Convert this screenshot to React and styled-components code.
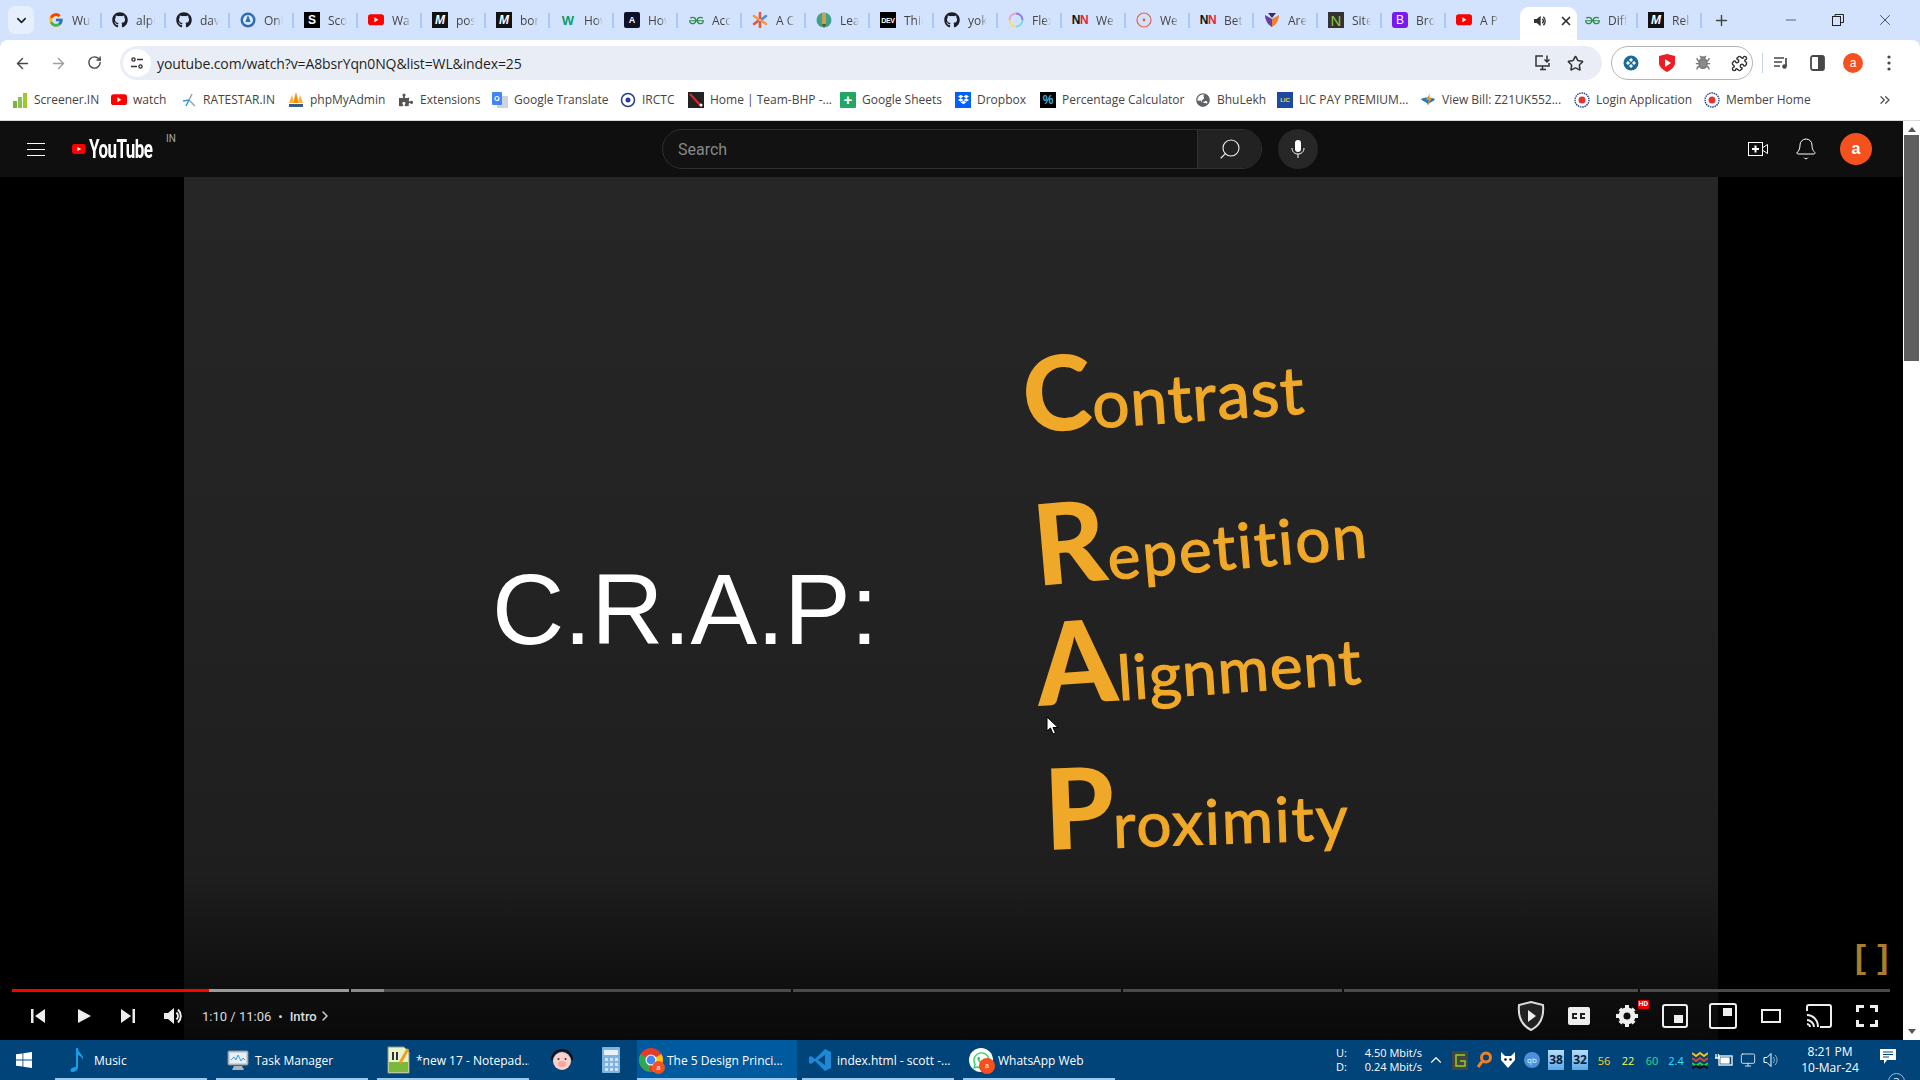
import React from 'react';
import styled, { createGlobalStyle } from 'styled-components';
import { ArrowLeft, ArrowRight, RotateCw, Star, Search, Bell, ChevronDown, Minus, Plus, X, ChevronRight, ChevronsRight, ChevronUp, Bug, Puzzle, Monitor } from 'lucide-react';
import { FaGithub, FaYoutube, FaGlobeAsia, FaPuzzlePiece, FaWhatsapp } from 'react-icons/fa';
import { FcGoogle } from 'react-icons/fc';
import { SiGeeksforgeeks, SiDropbox } from 'react-icons/si';

const Global = createGlobalStyle`
  html, body { margin: 0; padding: 0; background: #000; overflow: hidden; }
  * { box-sizing: border-box; }
  #root { width: 1920px; height: 1080px; }
`;
const UI = `"Open Sans", "Noto Sans", "Liberation Sans", sans-serif`;

const Screen = styled.div`
  width: 1920px; height: 1080px; display: flex; flex-direction: column; overflow: hidden;
  background: #d3e3fd; font-family: ${UI};
`;
/* ---------- tab strip ---------- */
const TabStrip = styled.div`
  height: 40px; flex: none; display: flex; align-items: stretch; background: #d3e3fd; position: relative;
`;
const TabSearch = styled.div`
  width: 26px; height: 28px; margin: 6px 4px 6px 8px; border-radius: 7px; background: #e6effd;
  display: flex; align-items: center; justify-content: center; color: #1f1f1f; flex: none;
`;
const Tab = styled.div`
  width: 64px; flex: none; display: flex; align-items: center; gap: 8px; padding-left: 10px; position: relative;
  &::after { content: ""; position: absolute; right: 0; top: 13px; height: 15px; width: 2px; background: #a8c7fa; display: ${p => p.$plain ? 'none' : 'block'}; }
`;
const TabTitle = styled.span`
  font-size: 12px; color: #444; width: 19px; overflow: hidden; white-space: nowrap;
  -webkit-mask-image: linear-gradient(90deg, #000 60%, transparent);
  mask-image: linear-gradient(90deg, #000 60%, transparent);
`;
const ActiveTab = styled.div`
  width: 57px; margin-top: 7px; margin-left: 10px; margin-right: -3px; flex: none; background: #fff; border-radius: 9px 9px 0 0;
  display: flex; align-items: center; justify-content: center; gap: 11px; color: #333; padding-left: 8px; height: 33px; padding-bottom: 5px;
`;
const NewTab = styled.div`
  width: 32px; flex: none; display: flex; align-items: center; justify-content: center; color: #444; margin-left: 3px;
`;
const WinButtons = styled.div`
  margin-left: auto; display: flex; align-items: center; color: #222; padding-right: 12px;
`;
const WinButton = styled.span`
  width: 47px; display: flex; justify-content: center;
`;
/* ---------- toolbar ---------- */
const Toolbar = styled.div`
  height: 40px; flex: none; background: #fff; border-radius: 8px 8px 0 0; display: flex; align-items: center; position: relative; padding-top: 6px;
`;
const NavButton = styled.span`
  width: 36px; display: flex; justify-content: center; color: ${p => p.$off ? '#9aa0a6' : '#474747'}; flex: none;
`;
const NavGroup = styled.div`
  display: flex; margin-left: 4px; width: 116px; flex: none;
`;
const Omnibox = styled.div`
  width: 1482px; height: 34px; background: #e9eef6; border-radius: 17px; display: flex; align-items: center; flex: none; padding: 0 10px 0 3px;
`;
const TuneCircle = styled.span`
  width: 28px; height: 28px; border-radius: 50%; background: #fff; display: flex; align-items: center; justify-content: center; flex: none;
`;
const Url = styled.span`
  font-size: 14px; margin-left: 6px; color: #1f1f1f; font-family: "Open Sans", sans-serif; flex: 1; white-space: nowrap; letter-spacing: -.12px;
`;
const OmniIcon = styled.span`
  width: 33px; display: flex; justify-content: center; color: #333; flex: none;
`;
const ExtPill = styled.div`
  margin-left: 9px; width: 142px; height: 34px; border: 1px solid #b5b5b5; border-radius: 17px; display: flex; align-items: center; padding-left: 1px; flex: none; background: #fff;
`;
const ExtIcon = styled.span`
  width: 36px; display: flex; justify-content: center; flex: none;
`;
const VLine = styled.span`
  width: 1px; height: 20px; background: #c4d3ea; margin: 0 9px; flex: none;
`;
const ToolIcon = styled.span`
  width: 36px; display: flex; justify-content: center; flex: none; color: #474747;
`;
const Avatar = styled.span`
  width: ${p => p.$d}px; height: ${p => p.$d}px; border-radius: 50%; background: #f4511e; color: #fff; display: flex; align-items: center; justify-content: center;
  font-family: "Liberation Sans", sans-serif; font-size: ${p => p.$fs}px; font-weight: ${p => p.$bold ? 700 : 400}; flex: none;
`;
/* ---------- bookmarks ---------- */
const BookmarkBar = styled.div`
  height: 41px; flex: none; background: #fff; display: flex; align-items: center; padding: 0 0 1px 12px; border-bottom: 1px solid #d8d8d8; position: relative;
`;
const Bookmark = styled.div`
  display: flex; align-items: center; gap: 6px; flex: none; width: ${p => p.$w}px; font-size: 12px; color: #444; white-space: nowrap;
`;
const BookmarkMore = styled.span`
  margin-left: auto; margin-right: 27px; color: #555; display: flex;
`;
const IconSlot = styled.span`
  width: 16px; height: 16px; display: flex; align-items: center; justify-content: center; flex: none;
`;
const Tile = styled.span`
  width: 16px; height: 16px; flex: none; display: flex; align-items: center; justify-content: center; background: ${p => p.$bg};
  color: ${p => p.$fg}; font: ${p => p.$weight || 700} ${p => p.$fs || 11}px/1 "Liberation Sans", sans-serif; border-radius: ${p => p.$r || 0}px; letter-spacing: ${p => p.$ls || 0}px; font-style: ${p => p.$it ? 'italic' : 'normal'};
`;
/* ---------- youtube ---------- */
const YouTubeArea = styled.div`
  flex: 1; min-height: 0; display: flex; background: #0f0f0f;
`;
const Page = styled.div`
  width: 1903px; flex: none; display: flex; flex-direction: column;
`;
const Masthead = styled.div`
  height: 56px; flex: none; background: #0f0f0f; display: flex; align-items: center; position: relative; padding-left: 27px;
`;
const Logo = styled.div`
  display: flex; align-items: center; margin-left: 27px; position: relative; width: 110px; height: 22px; flex: none;
`;
const LogoWord = styled.span`
  display: inline-block; font: 700 25px/1 Roboto, "Liberation Sans", sans-serif; color: #fff; transform: scaleX(.68); transform-origin: 0 50%; letter-spacing: -.8px; margin-left: 3px;
`;
const LogoCountry = styled.span`
  position: absolute; left: 94px; top: -4px; font: 400 10px/1 Roboto, sans-serif; color: #aaa;
`;
const SearchBox = styled.div`
  margin-left: 480px; width: 600px; height: 40px; flex: none; display: flex; border: 1px solid #303030; border-radius: 20px; overflow: hidden; background: #121212;
`;
const SearchInput = styled.div`
  flex: 1; padding-left: 15px; display: flex; align-items: center; font: 400 16px Roboto, sans-serif; color: #888;
`;
const SearchButton = styled.div`
  width: 64px; flex: none; background: #222; border-left: 1px solid #303030; display: flex; align-items: center; justify-content: center; color: #f1f1f1;
`;
const MicButton = styled.div`
  width: 40px; height: 40px; border-radius: 50%; background: #272727; margin-left: 16px; display: flex; align-items: center; justify-content: center; flex: none;
`;
const MastRight = styled.div`
  margin-left: auto; display: flex; align-items: center; padding-right: 31px; gap: 0; color: #fff;
`;
const MastIcon = styled.span`
  width: 48px; display: flex; justify-content: center; color: #fff;
`;
const Player = styled.div`
  flex: 1; min-height: 0; position: relative; background: #000; padding: 0 185px 0 184px; display: flex; overflow: hidden;
`;
const Frame = styled.div`
  flex: 1; background: linear-gradient(180deg, #262626 0%, #232323 45%, #1f1f1f 75%, #1c1c1c 100%);
`;
const Shade = styled.div`
  position: absolute; left: 0; right: 0; bottom: 0; height: 170px; background: linear-gradient(180deg, rgba(0,0,0,0), rgba(0,0,0,.68));
`;
const Headline = styled.div`
  position: absolute; left: 492px; top: 382px; font: 400 100px/1 "Liberation Sans", Arial, sans-serif; color: #fff; letter-spacing: -.4px;
`;
const Word = styled.div`
  position: absolute; left: ${p => p.$x}px; top: ${p => p.$y}px; transform: rotate(${p => p.$r}deg); transform-origin: 0 100%; white-space: nowrap; color: #f0a829;
  font-family: "Lato", sans-serif; display: flex; align-items: baseline; line-height: 1;
`;
const WordCap = styled.span`
  font-size: ${p => p.$s}px; font-weight: 900; margin-right: ${p => p.$m || 0}px; transform: rotate(${p => p.$cr || 0}deg);
`;
const WordRest = styled.span`
  font-size: ${p => p.$s}px; font-weight: 400; letter-spacing: ${p => p.$ls || 0}px; -webkit-text-stroke: 1.2px #f0a829;
`;
const Bracket = styled.div`
  position: absolute; left: 1855px; top: 763px; font: 700 33px/1 "Liberation Sans", sans-serif; color: #a97e2a; word-spacing: 2px;
`;
const Cursor = styled.svg`
  position: absolute; left: 1046px; top: 539px; width: 13px; height: 19px;
`;
const ProgressRow = styled.div`
  position: absolute; left: 12px; top: 812px; width: 1878px; height: 3px; display: flex; gap: 2px;
`;
const Chapter = styled.div`
  height: 3px; flex: none; width: ${p => p.$w}px; background: ${p => p.$bg || '#4a4a4a'};
`;
const ControlBar = styled.div`
  position: absolute; left: 0; right: 0; top: 815px; height: 48px; display: flex; align-items: center; padding-left: 14px; color: #eee;
`;
const CtrlBtn = styled.span`
  width: ${p => p.$w || 48}px; height: 48px; display: flex; align-items: center; justify-content: center; flex: none; position: relative;
`;
const TimeText = styled.span`
  font: 400 13px Roboto, sans-serif; color: #ddd; margin-left: 6px; white-space: nowrap;
`;
const Dot = styled.span`
  color: #ddd; font: 400 13px Roboto, sans-serif; margin: 0 7px;
`;
const Chap = styled.span`
  font: 500 13px Roboto, sans-serif; color: #ddd;
`;
const CtrlRight = styled.div`
  margin-left: auto; display: flex; margin-right: 12px;
`;
const HdBadge = styled.span`
  position: absolute; top: 8px; right: 2px; background: #e00; color: #fff; font: 700 7px/9px Roboto, sans-serif; padding: 0 1px; border-radius: 1px;
`;
const Scrollbar = styled.div`
  width: 17px; flex: none; background: #fff; display: flex; flex-direction: column; align-items: center; justify-content: space-between; position: relative; padding: 6px 0;
`;
const ScrollThumb = styled.div`
  position: absolute; top: 14px; left: 1px; width: 15px; height: 226px; background: #5f5f5f;
`;
const Arrow = styled.span`
  width: 0; height: 0; border-left: 4px solid transparent; border-right: 4px solid transparent; ${p => p.$up ? 'border-bottom: 5px solid #555;' : 'border-top: 5px solid #555;'}
`;
/* ---------- taskbar ---------- */
const Taskbar = styled.div`
  height: 40px; flex: none; background: #00447a; display: flex; align-items: stretch; color: #fff; font-size: 12px;
`;
const StartBtn = styled.span`
  width: 48px; margin-right: 7px; flex: none; display: flex; align-items: center; justify-content: center;
`;
const TaskItem = styled.div`
  width: ${p => p.$w || 152}px; flex: none; margin-right: ${p => p.$mr ?? 9}px; display: flex; align-items: center; gap: 5px; padding-left: ${p => p.$pl ?? 10}px; white-space: nowrap; position: relative;
  background: ${p => p.$active ? '#005a9e' : 'transparent'}; overflow: hidden;
  &::after { content: ""; position: absolute; left: 0; right: 0; bottom: 0; height: 2px; background: #99cbf2; }
`;
const TaskPlain = styled.span`
  width: ${p => p.$w}px; flex: none; display: flex; align-items: center; justify-content: center;
`;
const AppIcon = styled.span`
  width: 24px; height: 24px; position: relative; display: flex; align-items: center; justify-content: center; flex: none;
`;
const Badge = styled.span`
  position: absolute; right: -2px; bottom: -2px; width: 13px; height: 13px; border-radius: 50%; background: #f4511e; color: #fff; font: 400 7px/13px "Liberation Sans", sans-serif; text-align: center;
`;
const Tray = styled.div`
  margin-left: auto; display: flex; align-items: center; flex: none;
`;
const NetStats = styled.div`
  width: 86px; flex: none; display: grid; grid-template-columns: 24px 1fr; font-size: 11px; line-height: 14px; margin-right: 2px;
`;
const NetValue = styled.span`
  text-align: right; white-space: nowrap;
`;
const TrayCell = styled.span`
  width: 24px; flex: none; display: flex; justify-content: center; align-items: center; color: ${p => p.$c || '#fff'}; font-size: 11px;
`;
const NumTile = styled.span`
  width: 16px; height: 20px; background: linear-gradient(#b9dcf9, #5aa9ea); color: #0a2342; font: 700 12px/20px "Noto Sans", sans-serif; text-align: center;
`;
const Clock = styled.div`
  width: 84px; margin-left: 4px; flex: none; text-align: center; line-height: 16px; font-size: 12px; white-space: nowrap;
`;
const Notify = styled.div`
  width: 36px; flex: none; position: relative; display: flex; align-items: center; justify-content: center; margin-right: 12px;
`;
const NotifyCount = styled.span`
  position: absolute; left: 16px; top: 18px; width: 17px; height: 17px; border-radius: 50%; background: #00447a; border: 1px solid #8fc1ea; font-size: 11px; line-height: 15px; text-align: center;
`;

const Yt = ({ s = 16 }) => (
  <svg width={s} height={s * .72} viewBox="0 0 20 14"><rect width="20" height="14" rx="3.5" fill="#f00" /><path d="M8 4l5 3-5 3z" fill="#fff" /></svg>
);
const NN = () => <Tile $bg="transparent" $fg="#111" $fs={12} $ls={-0.5}>N<span style={{ color: '#e23' }}>N</span></Tile>;
const Fav = ({ k }) => {
  switch (k) {
    case 'g': return <IconSlot><FcGoogle size={16} /></IconSlot>;
    case 'gh': return <IconSlot><FaGithub size={16} color="#1b1f23" /></IconSlot>;
    case 'on': return <IconSlot><svg width="16" height="16" viewBox="0 0 16 16"><circle cx="8" cy="8" r="7.5" fill="#2d6fb0" /><circle cx="8" cy="8" r="5" fill="#d9e9f7" /><path d="M8 3l2.6 7H5.4z" fill="#2d6fb0" /></svg></IconSlot>;
    case 's': return <Tile $bg="#000" $fg="#fff" $fs={12}>S</Tile>;
    case 'yt': return <IconSlot><Yt /></IconSlot>;
    case 'm': return <Tile $bg="#121212" $fg="#fff" $fs={12} $it>M</Tile>;
    case 'w': return <Tile $bg="transparent" $fg="#0a9d6e" $fs={13}>W</Tile>;
    case 'a': return <Tile $bg="#0e1228" $fg="#fff" $fs={9} $r={2}>A</Tile>;
    case 'gfg': return <IconSlot><SiGeeksforgeeks size={15} color="#2f8d46" /></IconSlot>;
    case 'ast': return <IconSlot><svg width="16" height="16" viewBox="0 0 16 16" strokeWidth="2.6" strokeLinecap="round"><path d="M8 1v5" stroke="#e8553f" /><path d="M8 10v5" stroke="#e8553f" /><path d="M2 4l4 3" stroke="#f09a3e" /><path d="M14 4l-4 3" stroke="#4a8bd6" /><path d="M2 12l4-3" stroke="#e8553f" /><path d="M14 12l-4-3" stroke="#f09a3e" /></svg></IconSlot>;
    case 'pen': return <IconSlot><svg width="16" height="16" viewBox="0 0 16 16"><circle cx="8" cy="8" r="7.5" fill="#3fa08e" /><rect x="6" y="1" width="4" height="11" fill="#c9a24a" /><path d="M6 12h4l-2 3.5z" fill="#6b4a2a" /></svg></IconSlot>;
    case 'dev': return <Tile $bg="#000" $fg="#fff" $fs={7} $ls={-.3}>DEV</Tile>;
    case 'ring': return <IconSlot><svg width="16" height="16" viewBox="0 0 16 16" fill="none" strokeWidth="2"><path d="M8 1.5a6.5 6.5 0 0 1 6.5 6.5" stroke="#8a7be8" /><path d="M14.5 8A6.5 6.5 0 0 1 8 14.5" stroke="#7fd6e8" /><path d="M8 14.5A6.5 6.5 0 0 1 1.5 8" stroke="#f4dc7a" /><path d="M1.5 8A6.5 6.5 0 0 1 8 1.5" stroke="#f0a0c8" /></svg></IconSlot>;
    case 'nn': return <NN />;
    case 'dot': return <IconSlot><svg width="16" height="16" viewBox="0 0 16 16"><circle cx="8" cy="8" r="7" fill="none" stroke="#e5604c" strokeWidth="1.2" /><circle cx="8" cy="8" r="1.4" fill="#e5604c" /></svg></IconSlot>;
    case 'shield': return <IconSlot><svg width="16" height="16" viewBox="0 0 16 16"><path d="M1 3l7 4v8C4 13 1 8 1 3z" fill="#6a3fa0" /><path d="M15 3L8 7v8c4-2 7-7 7-12z" fill="#f08030" /><path d="M4 1l4 5 4-5z" fill="#3a2a6a" /></svg></IconSlot>;
    case 'n': return <Tile $bg="#333" $fg="#8cc63f" $fs={15} $weight={400}>N</Tile>;
    case 'b': return <Tile $bg="#7a18f0" $fg="#fff" $fs={12} $r={3} $weight={400}>B</Tile>;
    case 'bars': return <IconSlot><svg width="16" height="16" viewBox="0 0 16 16"><rect x="1" y="9" width="4" height="7" fill="#7cb342" /><rect x="6" y="5" width="4" height="11" fill="#8bc34a" /><rect x="11" y="1" width="4" height="15" fill="#9ccc2a" /></svg></IconSlot>;
    case 'rs': return <IconSlot><svg width="16" height="16" viewBox="0 0 16 16" fill="none" strokeWidth="1.5"><path d="M2 9l6-1" stroke="#2f9fd8" /><path d="M8 8l3-6" stroke="#9aa5ad" /><path d="M8 8l6 6" stroke="#9aa5ad" /><path d="M8 8l-3 6" stroke="#2f9fd8" /></svg></IconSlot>;
    case 'pma': return <IconSlot><svg width="16" height="16" viewBox="0 0 16 16"><path d="M8 0l3 11H5z" fill="#f29111" /><path d="M4 3l2 8H1z" fill="#f7b23b" /><path d="M12 3l3 8h-5z" fill="#f7b23b" /><rect x="1" y="12" width="14" height="3" fill="#3b5a8a" /></svg></IconSlot>;
    case 'ext': return <IconSlot><FaPuzzlePiece size={14} color="#555" /></IconSlot>;
    case 'tr': return <IconSlot><svg width="16" height="16" viewBox="0 0 16 16"><rect x="5" y="4" width="11" height="12" fill="#cfd4da" /><rect width="10" height="13" rx="1" fill="#4285f4" /><circle cx="5" cy="6.5" r="2" fill="none" stroke="#fff" strokeWidth="1.2" /></svg></IconSlot>;
    case 'ir': return <IconSlot><svg width="16" height="16" viewBox="0 0 16 16"><circle cx="8" cy="8" r="6.5" fill="none" stroke="#27408b" strokeWidth="1.5" /><circle cx="8" cy="8" r="2.5" fill="#27408b" /></svg></IconSlot>;
    case 'bhp': return <IconSlot><svg width="16" height="16" viewBox="0 0 16 16"><rect width="16" height="16" fill="#222" /><path d="M2 2l11 12" stroke="#e8252a" strokeWidth="2" /><circle cx="13" cy="13" r="1.5" fill="#fff" /></svg></IconSlot>;
    case 'sheets': return <Tile $bg="#23a566" $fg="#fff" $fs={15} $r={1} $weight={700}>+</Tile>;
    case 'db': return <IconSlot style={{ background: '#0061fe' }}><SiDropbox size={11} color="#fff" /></IconSlot>;
    case 'pct': return <Tile $bg="#000" $fg="#3fb4ef" $fs={12}>%</Tile>;
    case 'globe': return <IconSlot><FaGlobeAsia size={14} color="#5f6368" /></IconSlot>;
    case 'lic': return <Tile $bg="#1b4aa0" $fg="#ffd84a" $fs={6}>LIC</Tile>;
    case 'bolt': return <IconSlot><svg width="16" height="16" viewBox="0 0 16 16"><path d="M1 7c3-2 10-2 14 0-2 4-5 2-7 6-1-4-4-2-7-6z" fill="#2a78b8" /><path d="M10 1L6 8h3l-2 6 5-8H9z" fill="#f29111" /></svg></IconSlot>;
    case 'epf': return <IconSlot><svg width="16" height="16" viewBox="0 0 16 16"><circle cx="8" cy="8" r="7" fill="#fff" stroke="#27408b" strokeWidth="1.4" strokeDasharray="1.5 .8" /><circle cx="8" cy="8" r="3.5" fill="#e3342f" /></svg></IconSlot>;
    default: return <IconSlot />;
  }
};

const tabs = [['g','Wu'],['gh','alpi'],['gh','dav'],['on','Onl'],['s','Sco'],['yt','Wa'],['m','pos'],['m','bor'],['w','How'],['a','How'],['gfg','Acc'],['ast','A C'],['pen','Lea'],['dev','Thir'],['gh','yok'],['ring','Flex'],['nn','We'],['dot','We'],['nn','Bet'],['shield','Are'],['n','Site'],['b','Bro'],['yt','A P']];
const marks = [['bars','Screener.IN',99],['yt','watch',70],['rs','RATESTAR.IN',107],['pma','phpMyAdmin',110],['ext','Extensions',94],['tr','Google Translate',128],['ir','IRCTC',68],['bhp','Home | Team-BHP -...',152],['sheets','Google Sheets',115],['db','Dropbox',85],['pct','Percentage Calculator',155],['globe','BhuLekh',82],['lic','LIC PAY PREMIUM...',143],['bolt','View Bill: Z21UK552...',154],['epf','Login Application',130],['epf','Member Home',110]];
const chapters = [[337],[1],[440],[328],[219],[294],[250]];

const I = ({ children, w = 24, h = 24, vb = '0 0 24 24', ...r }) => <svg width={w} height={h} viewBox={vb} {...r}>{children}</svg>;
const Vol = ({ s = 24, c = '#eee' }) => (
  <I w={s} h={s}><path d="M3 9v6h4l6 5V4L7 9z" fill={c} /><path d="M15.5 8.5a5 5 0 0 1 0 7M17 5.5a9 9 0 0 1 0 13" stroke={c} strokeWidth="2" fill="none" /></I>
);

export default function App() {
  return (
    <Screen>
      <Global />
      <TabStrip>
        <TabSearch><ChevronDown size={15} strokeWidth={2.5} /></TabSearch>
        {tabs.map(([k, t], i) => <Tab key={i} $plain={i === 22}><Fav k={k} /><TabTitle>{t}</TabTitle></Tab>)}
        <ActiveTab><Vol s={16} c="#333" /><X size={14} strokeWidth={3} /></ActiveTab>
        <Tab><Fav k="gfg" /><TabTitle>Diff</TabTitle></Tab>
        <Tab><Fav k="m" /><TabTitle>Rel</TabTitle></Tab>
        <NewTab><Plus size={17} strokeWidth={2} /></NewTab>
        <WinButtons>
          <WinButton><Minus size={16} strokeWidth={1} /></WinButton>
          <WinButton><svg width="12" height="12" viewBox="0 0 12 12" fill="none" stroke="#222"><rect x=".5" y="2.5" width="8" height="9" /><path d="M3 2.5v-2h8.5v8h-3" /></svg></WinButton>
          <WinButton><X size={18} strokeWidth={1} /></WinButton>
        </WinButtons>
      </TabStrip>
      <Toolbar>
        <NavGroup>
          <NavButton><ArrowLeft size={17} strokeWidth={2} /></NavButton>
          <NavButton $off><ArrowRight size={17} strokeWidth={2} /></NavButton>
          <NavButton><RotateCw size={15} strokeWidth={2.2} /></NavButton>
        </NavGroup>
        <Omnibox>
          <TuneCircle><svg width="16" height="16" viewBox="0 0 16 16" fill="none" stroke="#333" strokeWidth="1.4"><circle cx="4.5" cy="4.5" r="1.6" /><path d="M8 4.5h6M2 11.5h6" /><circle cx="11.5" cy="11.5" r="1.6" /></svg></TuneCircle>
          <Url>youtube.com/watch?v=A8bsrYqn0NQ&amp;list=WL&amp;index=25</Url>
          <OmniIcon><svg width="18" height="18" viewBox="0 0 18 18" fill="none" stroke="#333" strokeWidth="1.5"><path d="M9 2H2v10h13V9M6 15.5h6M8.5 12v3.5M13 1.5v6M10.5 5.5L13 8l2.5-2.5" /></svg></OmniIcon>
          <OmniIcon><Star size={17} strokeWidth={2.2} /></OmniIcon>
        </Omnibox>
        <ExtPill>
          <ExtIcon><svg width="16" height="16" viewBox="0 0 16 16"><circle cx="8" cy="8" r="7.5" fill="#1d6a96" /><path d="M8 3l2 2-2 2-2-2zM8 9l2 2-2 2-2-2zM3 8l2-2 2 2-2 2zM9 8l2-2 2 2-2 2z" fill="#fff" /></svg></ExtIcon>
          <ExtIcon><svg width="16" height="18" viewBox="0 0 16 18"><path d="M0 2l8-2 8 2v7c0 4-4 7-8 9-4-2-8-5-8-9z" fill="#ee1c25" /><path d="M6 5l6 4-6 4z" fill="#fff" /></svg></ExtIcon>
          <ExtIcon><Bug size={16} fill="#8a8a8a" color="#777" /></ExtIcon>
          <ExtIcon><Puzzle size={17} color="#333" strokeWidth={2} /></ExtIcon>
        </ExtPill>
        <VLine />
        <ToolIcon style={{ marginLeft: -9 }}><svg width="16" height="16" viewBox="0 0 16 16" fill="none" stroke="#474747" strokeWidth="1.7"><path d="M1 3h10M1 7h8M1 11h6" /><path d="M13 3v8" /><circle cx="11.5" cy="11.5" r="1.5" fill="#474747" /></svg></ToolIcon>
        <ToolIcon><svg width="15" height="16" viewBox="0 0 15 16"><rect x="1" y="1" width="13" height="14" rx="2" fill="none" stroke="#474747" strokeWidth="1.8" /><rect x="8" y="1" width="6" height="14" fill="#474747" /></svg></ToolIcon>
        <ToolIcon><Avatar $d={20} $fs={12}>a</Avatar></ToolIcon>
        <ToolIcon><svg width="4" height="16" viewBox="0 0 4 16" fill="#474747"><circle cx="2" cy="2" r="1.6" /><circle cx="2" cy="8" r="1.6" /><circle cx="2" cy="14" r="1.6" /></svg></ToolIcon>
      </Toolbar>
      <BookmarkBar>
        {marks.map(([k, t, w]) => <Bookmark key={t} $w={w}><Fav k={k} /><span>{t}</span></Bookmark>)}
        <BookmarkMore><ChevronsRight size={16} /></BookmarkMore>
      </BookmarkBar>
      <YouTubeArea>
        <Page>
          <Masthead>
            <svg width="18" height="14" viewBox="0 0 18 14" fill="none" stroke="#fff"><path d="M0 1.5h18M0 7.5h18M0 13.5h18" /></svg>
            <Logo>
              <svg width="28" height="20" viewBox="0 0 28 20"><rect width="28" height="20" rx="5" fill="#f00" /><path d="M11 6l8 4-8 4z" fill="#fff" /></svg>
              <LogoWord>YouTube</LogoWord>
              <LogoCountry>IN</LogoCountry>
            </Logo>
            <SearchBox>
              <SearchInput>Search</SearchInput>
              <SearchButton><Search size={24} strokeWidth={1.1} style={{ transform: 'scaleX(-1)' }} /></SearchButton>
            </SearchBox>
            <MicButton><svg width="24" height="24" viewBox="0 0 24 24"><rect x="9" y="3" width="6" height="12" rx="3" fill="#fff" /><path d="M6 11c0 4 3 6 6 6s6-2 6-6M12 17v4" stroke="#fff" fill="none" /></svg></MicButton>
            <MastRight>
              <MastIcon><svg width="24" height="24" viewBox="0 0 24 24" fill="none" stroke="#fff"><rect x="2.5" y="5.5" width="14" height="13" /><path d="M9.5 8.5v7M6 12h7" strokeWidth="2" /><path d="M17 10.5l4.5-3v9l-4.500-3" /></svg></MastIcon>
              <MastIcon><Bell size={24} strokeWidth={1} /></MastIcon>
              <Avatar $d={32} $fs={16} $bold style={{ marginLeft: 10 }}>a</Avatar>
            </MastRight>
          </Masthead>
          <Player>
            <Frame />
            <Headline>C.R.A.P:</Headline>
            <Word $x={1026} $y={164} $r={-4}><WordCap $s={104}>C</WordCap><WordRest $s={66} $ls={1}>ontrast</WordRest></Word>
            <Word $x={1038} $y={310} $r={-5}><WordCap $s={112}>R</WordCap><WordRest $s={62} $ls={2}>epetition</WordRest></Word>
            <Word $x={1040} $y={428} $r={-4}><WordCap $s={114}>A</WordCap><WordRest $s={62} $ls={1}>lignment</WordRest></Word>
            <Word $x={1046} $y={574} $r={-2}><WordCap $s={112} $m={-2}>P</WordCap><WordRest $s={62} $ls={2}>roximity</WordRest></Word>
            <Shade />
            <Bracket>[ ]</Bracket>
            <Cursor viewBox="0 0 13 19"><path d="M1 1v14l3.500-3 2.500 6 2.500-1-2.500-5.500H12z" fill="#fff" stroke="#000" strokeWidth="1" /></Cursor>
            <ProgressRow>
              <Chapter $w={197} $bg="#f00" style={{ marginRight: -2 }} />
              <Chapter $w={140} $bg="#9a9a9a" />
              <Chapter $w={33} $bg="#8a8a8a" style={{ marginRight: -2 }} />
              <Chapter $w={407} />
              <Chapter $w={328} />
              <Chapter $w={219} />
              <Chapter $w={294} />
              <Chapter $w={250} />
            </ProgressRow>
            <ControlBar>
              <CtrlBtn><I fill="#eee"><path d="M5 5h2.500v14H5zM19 5v14L9 12z" /></I></CtrlBtn>
              <CtrlBtn $w={44}><I fill="#eee"><path d="M6 5v14l13-7z" /></I></CtrlBtn>
              <CtrlBtn $w={44}><I fill="#eee"><path d="M5 5v14l10-7zM16.500 5H19v14h-2.500z" /></I></CtrlBtn>
              <CtrlBtn $w={46}><Vol /></CtrlBtn>
              <TimeText>1:10 / 11:06</TimeText>
              <Dot>•</Dot>
              <Chap>Intro</Chap>
              <ChevronRight size={16} strokeWidth={2} color="#ddd" />
              <CtrlRight>
                <CtrlBtn><svg width="28" height="30" viewBox="0 0 28 30"><path d="M14 1l12 3c1 10-2 20-12 25C4 24 1 14 2 4z" fill="#222" stroke="#ddd" strokeWidth="2" /><path d="M11 9l8 6-8 6z" fill="#eee" /></svg></CtrlBtn>
                <CtrlBtn><svg width="24" height="20" viewBox="0 0 24 20"><rect width="22" height="18" x="1" y="1" rx="2" fill="#eee" /><path d="M10 8H6v4h4M18 8h-4v4h4" stroke="#222" strokeWidth="2" fill="none" /></svg></CtrlBtn>
                <CtrlBtn><svg width="24" height="24" viewBox="0 0 24 24"><circle cx="12" cy="12" r="6" fill="none" stroke="#eee" strokeWidth="5" /><path d="M10 1h4v4h-4zM10 19h4v4h-4zM1 10h4v4H1zM19 10h4v4h-4zM3.500 6.300L6.300 3.500l2.800 2.800-2.800 2.800zM14.900 17.700l2.800-2.800 2.800 2.800-2.800 2.800zM17.700 3.500l2.800 2.800-2.800 2.800-2.800-2.800zM6.300 14.900l2.800 2.800-2.800 2.800-2.800-2.800z" fill="#eee" /></svg><HdBadge>HD</HdBadge></CtrlBtn>
                <CtrlBtn><svg width="26" height="24" viewBox="0 0 26 24" fill="none"><rect x="1" y="1" width="24" height="22" rx="2" stroke="#eee" strokeWidth="2" /><rect x="12" y="11" width="9" height="8" fill="#eee" /></svg></CtrlBtn>
                <CtrlBtn><svg width="28" height="26" viewBox="0 0 28 26" fill="none"><rect x="1" y="1" width="26" height="24" rx="2" stroke="#eee" strokeWidth="2" /><rect x="14" y="5" width="9" height="8" fill="#eee" /></svg></CtrlBtn>
                <CtrlBtn><svg width="20" height="14" viewBox="0 0 20 14" fill="none"><rect x="1" y="1" width="18" height="12" stroke="#eee" strokeWidth="2" /></svg></CtrlBtn>
                <CtrlBtn><svg width="26" height="24" viewBox="0 0 26 24" fill="none" stroke="#eee" strokeWidth="2"><path d="M1 7V3a2 2 0 0 1 2-2h20a2 2 0 0 1 2 2v18a2 2 0 0 1-2 2h-9" /><path d="M1 11c6 0 11 5 11 12M1 16c3 0 7 3 7 7M1 20c2 0 3 2 3 3" /></svg></CtrlBtn>
                <CtrlBtn><svg width="22" height="22" viewBox="0 0 22 22" fill="none" stroke="#eee" strokeWidth="3"><path d="M1.500 7V1.500H8M14 1.500h6.500V7M20.500 15v5.500H14M8 20.500H1.500V15" /></svg></CtrlBtn>
              </CtrlRight>
            </ControlBar>
          </Player>
        </Page>
        <Scrollbar>
          <Arrow $up />
          <ScrollThumb />
          <Arrow />
        </Scrollbar>
      </YouTubeArea>
      <Taskbar>
        <StartBtn><svg width="16" height="16" viewBox="0 0 16 16" fill="#fff"><path d="M0 2.300l6.500-.9v6.200H0zM7.300 1.300L16 0v7.600H7.300zM0 8.400h6.500v6.200L0 13.700zM7.300 8.400H16V16l-8.700-1.300z" /></svg></StartBtn>
        <TaskItem><AppIcon><svg width="14" height="26" viewBox="0 0 14 26"><path d="M6 1h2c0 5 6 6 5 12-1-3-3-4-5-5v12c0 3-3 5-6 5-2 0-2-3 0-4 1-1 3-1 4-1z" fill="#1e9be8" /></svg></AppIcon><span>Music</span></TaskItem>
        <TaskItem><AppIcon><svg width="24" height="24" viewBox="0 0 24 24"><rect x="2" y="3" width="20" height="14" rx="1" fill="#c9d4dc" stroke="#7f8b94" /><rect x="4" y="5" width="16" height="10" fill="#e8f0f5" /><path d="M5 12l3-3 2 3 2-5 3 6 2-3 2 2" stroke="#3f9be0" fill="none" /><path d="M8 18h8l2 4H6z" fill="#aab5bd" /></svg></AppIcon><span>Task Manager</span></TaskItem>
        <TaskItem><AppIcon><svg width="24" height="28" viewBox="0 0 24 28"><path d="M1 1h16l5 5v21H1z" fill="#eaf3d0" stroke="#8a9a70" /><rect x="2" y="16" width="19" height="10" fill="#7cb83a" /><path d="M6 6v8M10 6v8" stroke="#333" strokeWidth="2" /><path d="M21 3l-8 14" stroke="#f0a020" strokeWidth="3" /></svg></AppIcon><span>*new 17 - Notepad...</span></TaskItem>
        <TaskPlain $w={48}><svg width="24" height="24" viewBox="0 0 24 24"><path d="M2 12a10 10 0 0 1 20 0" stroke="#111" strokeWidth="2" fill="none" /><circle cx="12" cy="13" r="9" fill="#fbd0c8" /><ellipse cx="12" cy="16" rx="4" ry="3" fill="#f4a6a0" /><circle cx="8.500" cy="11" r="1" fill="#333" /><circle cx="15.500" cy="11" r="1" fill="#333" /></svg></TaskPlain>
        <TaskPlain $w={50} style={{ marginRight: 1 }}><svg width="18" height="26" viewBox="0 0 18 26"><rect width="18" height="26" rx="1" fill="#7fb4de" /><rect x="2" y="3" width="14" height="5" fill="#e6f1fa" /><path d="M3 11h3v3H3zM8 11h3v3H8zM13 11h3v3h-3zM3 16h3v3H3zM8 16h3v3H8zM13 16h3v3h-3zM3 21h3v3H3zM8 21h3v3H8zM13 21h3v3h-3z" fill="#cfe3f4" /></svg></TaskPlain>
        <TaskItem $active $w={160} $mr={5} $pl={2} style={{ gap: 4 }}><AppIcon><svg width="24" height="24" viewBox="0 0 24 24"><circle cx="12" cy="12" r="12" fill="#e33b2e" /><path d="M12 12L1.600 6A12 12 0 0 0 10 23.800z" fill="#2da94f" /><path d="M12 12l10.400-6A12 12 0 0 1 14 23.800z" fill="#fbc116" /><circle cx="12" cy="12" r="5.500" fill="#fff" /><circle cx="12" cy="12" r="4.400" fill="#4285f4" /></svg><Badge>a</Badge></AppIcon><span>The 5 Design Princi...</span></TaskItem>
        <TaskItem $pl={6}><AppIcon><svg width="24" height="24" viewBox="0 0 24 24"><path d="M17 1L7 11 3 8 1 9v6l2 1 4-3 10 10 6-3V4z" fill="#1e88d6" /><path d="M17 7v10l-7-5z" fill="#00447a" /></svg></AppIcon><span>index.html - scott -...</span></TaskItem>
        <TaskItem $mr={0} $pl={6}><AppIcon><span style={{ width: 24, height: 24, borderRadius: '50%', background: '#fff', display: 'flex', alignItems: 'center', justifyContent: 'center' }}><FaWhatsapp size={19} color="#25d366" /></span><Badge style={{ width: 16, height: 16, lineHeight: '16px' }}>a</Badge></AppIcon><span>WhatsApp Web</span></TaskItem>
        <Tray>
          <NetStats>
            <span>U:</span><NetValue>4.50 Mbit/s</NetValue>
            <span>D:</span><NetValue>0.24 Mbit/s</NetValue>
          </NetStats>
          <TrayCell><ChevronUp size={18} strokeWidth={1.5} /></TrayCell>
          <TrayCell><span style={{ width: 16, height: 19, background: '#444', display: 'flex', alignItems: 'center', justifyContent: 'center' }}><svg width="13" height="15" viewBox="0 0 13 15" fill="none" stroke="#8fd11e" strokeWidth="1.500"><path d="M11 2H2v11h9V8H6" /></svg></span></TrayCell>
          <TrayCell><svg width="16" height="18" viewBox="0 0 16 18" fill="none" stroke="#f2811d" strokeWidth="3"><circle cx="10" cy="6.500" r="4.500" /><path d="M6.500 10L2 16" /></svg></TrayCell>
          <TrayCell><svg width="14" height="16" viewBox="0 0 14 16"><path d="M0 0l4 4h6l4-4v8l-7 8-7-8z" fill="#fff" /><circle cx="4.500" cy="7.500" r="1.300" fill="#111" /><circle cx="9.500" cy="7.500" r="1.300" fill="#111" /></svg></TrayCell>
          <TrayCell><span style={{ width: 16, height: 16, borderRadius: '50%', background: '#4f8ed8', fontSize: 8, lineHeight: '16px', textAlign: 'center', color: '#dff' }}>qb</span></TrayCell>
          <TrayCell><NumTile>38</NumTile></TrayCell>
          <TrayCell><NumTile>32</NumTile></TrayCell>
          <TrayCell $c="#ffd21e">56</TrayCell>
          <TrayCell $c="#fff44a">22</TrayCell>
          <TrayCell $c="#28e08c">60</TrayCell>
          <TrayCell $c="#2ce6ff">2.4</TrayCell>
          <TrayCell><svg width="16" height="20" viewBox="0 0 16 20" fill="none" strokeWidth="2"><path d="M0 3l4 3 4-3 4 3 4-3" stroke="#f2c21d" /><path d="M0 8l4 3 4-3 4 3 4-3" stroke="#e8402a" /><path d="M0 13l4 3 4-3 4 3 4-3" stroke="#35c24a" /><path d="M0 18l4-2 4 2 4-2 4 2" stroke="#111" /></svg></TrayCell>
          <TrayCell><svg width="18" height="14" viewBox="0 0 18 14" fill="none" stroke="#fff" strokeWidth="1.300"><rect x="4" y="3" width="13" height="9" /><rect x="6" y="5" width="8" height="5" fill="#fff" /><path d="M1 1v4M3.500 1v4M0 5h5" /></svg></TrayCell>
          <TrayCell><Monitor size={16} strokeWidth={1.2} /></TrayCell>
          <TrayCell><svg width="18" height="16" viewBox="0 0 18 16" fill="none" stroke="#fff" strokeWidth="1"><path d="M1 5.500v5h3l4 4v-13l-4 4z" /><path d="M10 5a4 4 0 0 1 0 6M12 3a7 7 0 0 1 0 10" opacity=".55" /></svg></TrayCell>
          <Clock><div>8:21 PM</div><div>10-Mar-24</div></Clock>
          <Notify>
            <svg width="16" height="16" viewBox="0 0 16 16" style={{ marginTop: -6, marginLeft: -4 }}><path d="M0 0h16v11H7l-3 4v-4H0z" fill="#fff" /><path d="M3 3h10M3 5.500h10M3 8h6" stroke="#00447a" /></svg>
            <NotifyCount>3</NotifyCount>
          </Notify>
        </Tray>
      </Taskbar>
    </Screen>
  );
}
